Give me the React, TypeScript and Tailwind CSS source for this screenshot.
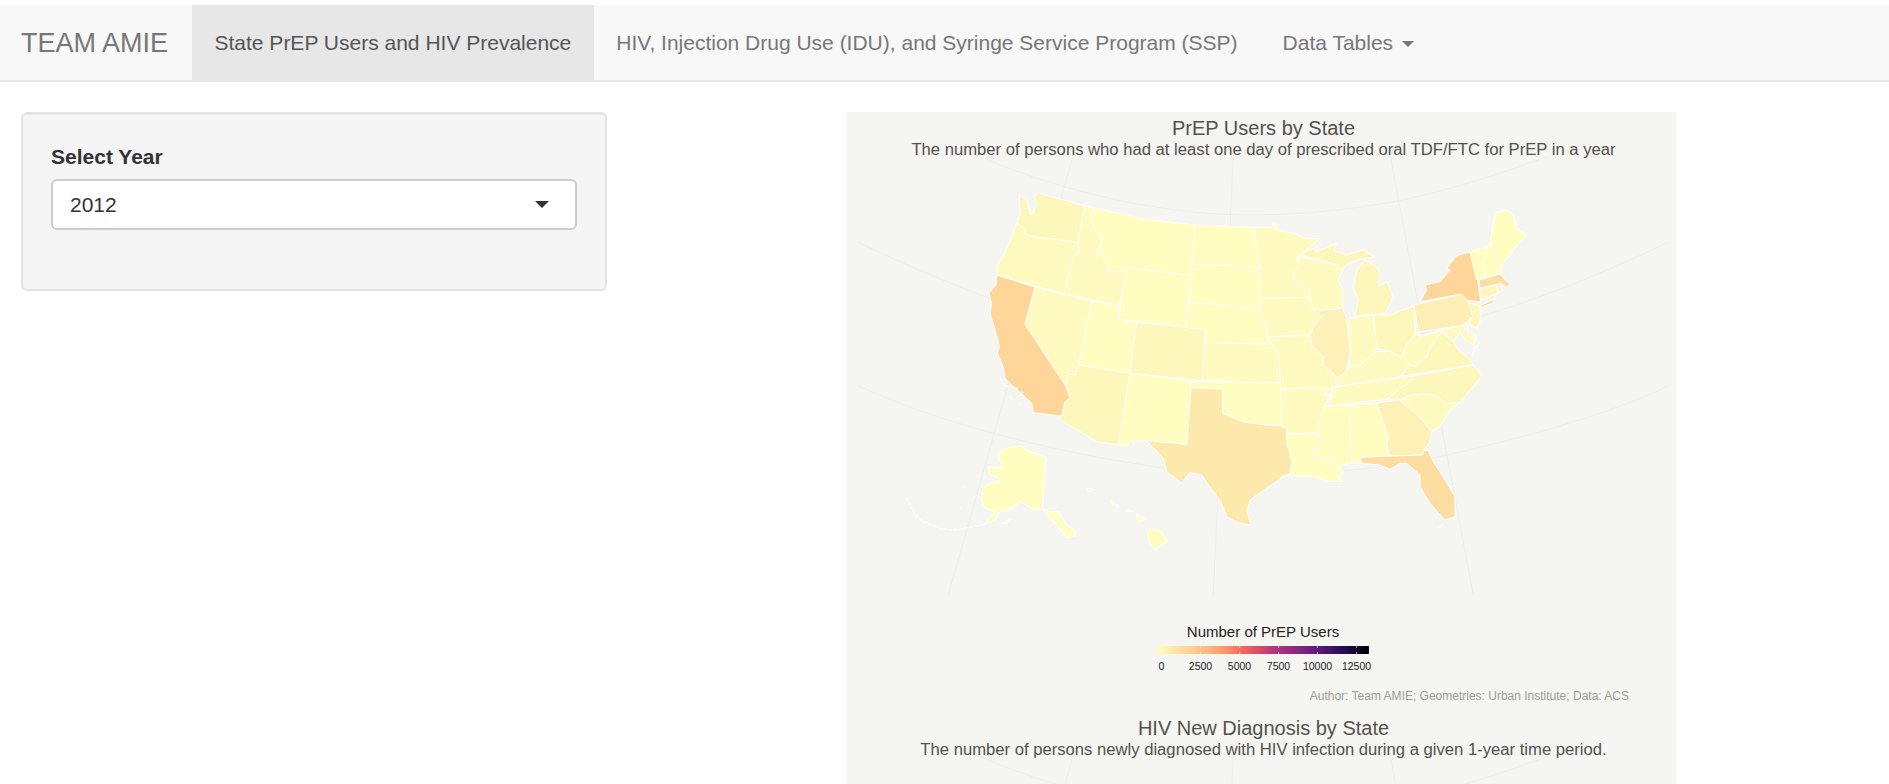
const TITLE = 'text-center text-[20px] leading-[20px] text-[#53524c]';
const SUBTITLE = 'mt-[5px] text-center text-[16.65px] leading-[14px] text-[#53524c]';

const L0 = '#fffdc0';
const L1 = '#fefac0';
const L2 = '#fdf7bc';
const L3 = '#fdf1b7';
const L4 = '#fdeeb5';
const TX = '#fee9ac';
const FL = '#fedda2';
const CA = '#ffd69a';

// points are in map units: 3 units = 1 screen pixel
const STATES: [string, string, string][] = [
  ['WA', L2, '538,285 560,300 572,345 580,340 590,310 582,290 592,278 735,318 712,430 680,422 640,417 600,413 575,410 558,405 552,385 530,368 541,345'],
  ['OR', L1, '530,368 552,385 558,405 600,413 640,417 680,422 712,430 720,447 700,475 688,495 692,505 672,582 470,525 472,495 490,465 510,425'],
  ['CA', CA, '470,525 585,561 555,672 680,862 690,895 675,905 665,948 580,938 575,910 550,885 525,865 495,835 490,800 472,760 478,740 468,700 450,640 455,610 447,580 468,555'],
  ['NV', L1, '585,561 755,603 716,795 705,825 685,822 680,862 555,672'],
  ['ID', L1, '735,318 760,323 752,365 785,420 770,465 790,465 805,515 855,515 860,503 838,617 672,582 692,505 688,495 700,475 720,447 712,430'],
  ['MT', L0, '760,323 900,355 1065,375 1052,527 860,503 855,515 805,515 790,465 770,465 785,420 752,365'],
  ['WY', L0, '860,503 1052,527 1038,683 835,657'],
  ['UT', L0, '755,603 838,617 835,657 890,667 870,820 716,795'],
  ['CO', L2, '890,667 1096,688 1087,842 870,820'],
  ['AZ', L2, '716,795 870,820 835,1035 770,1025 655,955 665,948 675,905 690,895 680,862 685,822 705,825'],
  ['NM', L0, '870,820 1053,843 1053,863 1040,1033 920,1022 865,1025 865,1038 835,1035'],
  ['TX', TX, '1053,863 1148,867 1148,940 1210,965 1280,975 1325,975 1340,985 1340,1030 1357,1080 1350,1120 1315,1140 1230,1200 1220,1230 1232,1275 1195,1268 1160,1250 1140,1200 1105,1155 1085,1125 1050,1118 1025,1148 980,1115 970,1075 920,1022 1040,1033'],
  ['OK', L0, '1055,845 1320,848 1323,867 1325,980 1340,985 1325,975 1280,975 1210,965 1148,940 1148,867 1053,863'],
  ['KS', L1, '1095,727 1295,733 1318,765 1320,848 1085,842'],
  ['NE', L0, '1048,607 1205,620 1235,622 1260,630 1282,710 1295,733 1095,727 1096,688 1038,683'],
  ['SD', L0, '1055,492 1258,500 1252,515 1262,530 1262,592 1258,620 1260,630 1235,622 1205,620 1048,607'],
  ['ND', L0, '1065,375 1242,382 1258,485 1258,500 1055,492'],
  ['MN', L1, '1242,382 1295,382 1300,368 1310,390 1360,400 1395,415 1440,415 1375,470 1375,500 1360,515 1365,545 1405,575 1410,592 1260,595 1262,510 1258,485'],
  ['IA', L1, '1260,595 1408,592 1415,620 1445,650 1420,680 1410,705 1285,710 1260,630'],
  ['MO', L1, '1285,710 1410,707 1415,735 1450,770 1450,795 1480,820 1490,835 1488,860 1478,860 1470,885 1452,885 1463,863 1322,867 1318,765 1295,733'],
  ['AR', L1, '1322,867 1463,863 1452,885 1470,885 1450,930 1432,998 1340,1002 1340,985 1325,980'],
  ['LA', L0, '1340,1002 1430,1000 1443,1025 1423,1078 1485,1078 1495,1105 1510,1115 1495,1135 1510,1145 1465,1145 1415,1128 1360,1128 1330,1125 1315,1140 1350,1120 1357,1080 1340,1030'],
  ['MS', L0, '1450,920 1530,915 1535,1090 1510,1095 1492,1110 1485,1078 1423,1078 1443,1025 1432,998'],
  ['AL', L0, '1530,915 1610,908 1645,1010 1640,1030 1650,1068 1560,1072 1565,1090 1550,1085 1535,1090'],
  ['GA', L3, '1610,908 1680,900 1730,940 1775,995 1768,1030 1750,1050 1748,1065 1650,1068 1640,1030 1645,1010'],
  ['SC', L1, '1680,905 1710,885 1760,880 1790,890 1820,910 1860,908 1830,930 1800,980 1775,995 1730,940'],
  ['FL', FL, '1560,1072 1650,1068 1748,1065 1750,1050 1765,1052 1780,1085 1815,1140 1845,1190 1845,1250 1815,1260 1770,1210 1740,1160 1740,1125 1700,1090 1680,1090 1650,1108 1620,1095 1565,1090'],
  ['TN', L1, '1490,860 1720,828 1710,845 1650,890 1645,897 1465,918 1478,880'],
  ['NC', L2, '1720,828 1900,795 1920,820 1925,830 1890,870 1860,908 1820,910 1790,890 1760,880 1710,885 1680,900 1645,897 1650,890 1710,845'],
  ['KY', L1, '1490,860 1488,835 1515,820 1530,800 1560,795 1605,755 1650,755 1685,770 1710,795 1680,830'],
  ['VA', L2, '1680,830 1710,795 1725,800 1760,770 1775,735 1805,695 1840,725 1860,755 1880,770 1900,793'],
  ['WV', L1, '1725,700 1735,697 1740,712 1800,690 1805,695 1775,735 1760,770 1725,800 1710,795 1685,770 1700,735'],
  ['OH', L2, '1600,645 1650,645 1720,618 1727,700 1700,735 1685,770 1650,755 1610,745'],
  ['IN', L1, '1523,655 1600,645 1610,745 1605,755 1560,795 1530,800 1532,760'],
  ['IL', L3, '1435,630 1508,625 1520,655 1532,760 1515,820 1488,835 1480,820 1450,795 1450,770 1415,735 1410,705 1420,680 1445,650 1415,620'],
  ['WI', L1, '1375,470 1430,480 1498,495 1515,490 1495,542 1508,570 1508,625 1435,630 1415,620 1405,575 1365,545 1360,515 1375,500'],
  ['MI', L2, '1575,480 1610,500 1620,520 1615,560 1640,545 1660,590 1635,640 1545,648 1555,600 1540,565 1550,510'],
  ['UP', L2, '1380,465 1420,445 1430,455 1490,430 1480,450 1520,465 1570,450 1605,470 1560,478 1525,490 1500,510 1495,495 1430,478'],
  ['PA', L4, '1722,615 1870,582 1895,605 1898,650 1870,675 1735,697'],
  ['NY', CA, '1740,605 1760,570 1755,555 1800,545 1830,510 1820,505 1850,467 1890,456 1910,515 1922,605 1910,605 1880,600 1865,582'],
  ['LI', CA, '1920,618 1965,595 1955,610 1925,622'],
  ['NJ', L2, '1885,605 1920,620 1923,660 1910,685 1885,670 1898,650 1890,625'],
  ['DE', L1, '1878,668 1885,690 1910,710 1890,712'],
  ['MD', L1, '1805,690 1870,675 1890,712 1910,715 1900,735 1875,720 1860,695 1840,725'],
  ['ES', L2, '1905,740 1915,735 1895,770'],
  ['VT', L0, '1890,456 1942,440 1930,490 1935,533 1910,540'],
  ['NH', L0, '1942,440 1950,430 1985,510 1980,520 1935,533 1930,490'],
  ['ME', L0, '1950,430 1965,340 2000,328 2020,345 2030,385 2060,405 2020,450 1990,490 1985,510'],
  ['MA', '#ffdca3', '1918,540 1980,522 1995,540 2010,550 2000,562 1982,550 1920,565'],
  ['CT', L2, '1920,565 1968,555 1975,578 1925,600'],
  ['RI', L2, '1968,555 1982,552 1988,572 1975,578'],
  ['AK', L0, '475,1058 505,1043 545,1038 565,1053 618,1072 607,1228 580,1230 555,1212 540,1205 515,1225 480,1235 465,1260 430,1275 465,1235 435,1225 423,1190 430,1162 460,1145 478,1148 475,1132 450,1125 445,1100 490,1105 475,1075'],
  ['AK2', L0, '607,1228 630,1235 655,1235 680,1275 705,1292 705,1308 680,1315 650,1275'],
  ['KOD', L0, '485,1270 510,1258 500,1272'],
  ['HI', L0, '928,1285 965,1295 982,1325 945,1348 930,1335 922,1310'],
  ['MAU', L0, '888,1242 920,1258 895,1265'],
  ['MOL', L0, '858,1228 882,1235 860,1235'],
  ['OAH', L0, '812,1200 838,1220 820,1218'],
  ['KAU', L0, '740,1165 760,1165 755,1175 740,1172'],
];

const Graticule = () => (
  <g fill="none" stroke="#ebebe6" strokeWidth="2.5">
    <path d="M415,168 C700,290 1000,345 1230,345 C1400,345 1550,325 1675,303 C1850,265 2000,215 2125,168" />
    <path d="M55,427 C500,640 900,760 1240,760 C1500,760 1750,710 1925,648 C2150,580 2330,500 2485,427" />
    <path d="M55,858 C300,970 650,1060 980,1105 C1240,1140 1550,1120 1775,1075 C2050,1015 2300,945 2485,858" />
    <path d="M700,165 L325,1485" />
    <path d="M1180,165 L1120,1485" />
    <path d="M1650,165 L1900,1485" />
  </g>
);

const UsMap = () => (
  <svg className="block h-[440px] w-[830px]" viewBox="18 165 2490 1320">
    <Graticule />
    <g stroke="#ffffff" strokeWidth="3" strokeLinejoin="round">
      {STATES.map(([name, fill, points]) => (
        <polygon key={name} fill={fill} points={points} />
      ))}
    </g>
    {/* Aleutians, islands off California, the Keys */}
    <g fill="none" stroke="#ffffff" strokeWidth="3.5" strokeLinecap="round">
      <path d="M430,1275 L390,1282 L340,1290 L300,1285 L250,1265 L225,1245" strokeDasharray="9 7" />
      <path d="M222,1240 L205,1200 M200,1195 L202,1200 M410,1125 L418,1132 M370,1160 L371,1163 M360,1222 L361,1226 M410,1187 L420,1188" strokeDasharray="6 8" />
      <path d="M625,1250 L655,1280 L680,1310 M640,1240 L675,1285" strokeWidth="3" />
      <path d="M490,855 L505,860 M522,862 L532,865 M545,875 L550,878 M510,890 L515,893 M540,910 L541,915" />
      <path d="M1795,1282 L1810,1275" />
    </g>
    <polygon fill={L2} stroke="#ffffff" strokeWidth="1.5" points="1798,1280 1808,1274 1804,1281" />
  </svg>
);

const Legend = () => (
  <div className="ml-[311px] w-[212px]">
    <div className="mt-[30px] whitespace-nowrap text-center text-[15px] leading-[14px] text-[#222222]">Number of PrEP Users</div>
    <svg className="mt-[7px] block h-[8px] w-[212px]" viewBox="0 0 212 8">
      <defs>
        <linearGradient id="magma">
          <stop offset="0" stopColor="#fcfdbf" />
          <stop offset="0.17" stopColor="#fecf92" />
          <stop offset="0.3" stopColor="#fe9f6d" />
          <stop offset="0.42" stopColor="#f1605d" />
          <stop offset="0.55" stopColor="#b63679" />
          <stop offset="0.72" stopColor="#721f81" />
          <stop offset="0.85" stopColor="#2d1160" />
          <stop offset="1" stopColor="#000004" />
        </linearGradient>
      </defs>
      <rect width="212" height="8" fill="url(#magma)" />
      <g stroke="#ffffff" strokeWidth="0.8" opacity="0.8">
        {[43.7, 82.7, 121.7, 160.3, 199.7].map(x => (
          <path key={x} d={`M${x},0 V2 M${x},6 V8`} />
        ))}
      </g>
    </svg>
    <div className="-ml-[15px] mt-[6px] grid w-[234px] grid-cols-6 text-center text-[10.5px] leading-[12px] text-[#222222]">
      {['0', '2500', '5000', '7500', '10000', '12500'].map(label => (
        <span key={label}>{label}</span>
      ))}
    </div>
  </div>
);

export default function App ()
{
  return (
    <div className="h-[784px] overflow-hidden bg-white pt-[5px] font-['Liberation_Sans',sans-serif]">
      {/* Navbar */}
      <nav className="flex h-[77px] items-stretch border-b-2 border-[#e7e7e7] bg-[#f8f8f8] text-[21px] text-[#777777]">
        <a className="flex w-[192px] items-center pl-[21px] pt-[1px] text-[27px]">TEAM AMIE</a>
        <a className="flex items-center bg-[#e7e7e7] px-[22.5px] text-[#555555]">State PrEP Users and HIV Prevalence</a>
        <a className="flex items-center px-[22.5px]">HIV, Injection Drug Use (IDU), and Syringe Service Program (SSP)</a>
        <a className="flex items-center px-[22.5px]">
          Data Tables
          <span className="ml-[9px] mt-[2px] border-x-[6px] border-t-[6px] border-x-transparent border-t-[#777777]"></span>
        </a>
      </nav>

      <div className="flex pt-[30px]">
        {/* Sidebar */}
        <aside className="w-[630px] shrink-0 pl-[21px] pr-[23px]">
          <div className="h-[179px] rounded-[6px] border-2 border-[#e3e3e3] bg-[#f5f5f5] px-[28px] pt-[30px] shadow-[inset_0_1px_1px_rgba(0,0,0,0.05)]">
            <label className="block text-[21px] font-bold leading-[26px] text-[#333333]">Select Year</label>
            <div className="mt-[9px] flex h-[51px] items-center justify-between rounded-[6px] border-2 border-[#cccccc] bg-white pl-[17px] pr-[26px] text-[21px] text-[#333333]">
              <span>2012</span>
              <span className="border-x-[7.5px] border-t-[7.5px] border-x-transparent border-t-[#333333]"></span>
            </div>
          </div>
        </aside>

        {/* Plot image */}
        <main className="flex flex-1 justify-center pl-[3px]">
          <div className="h-[672px] w-[830px] overflow-hidden bg-[#f5f5f2]">
            <div className="h-[43px] whitespace-nowrap pl-[5px] pt-[6px]">
              <div className={TITLE}>PrEP Users by State</div>
              <div className={SUBTITLE}>The number of persons who had at least one day of prescribed oral TDF/FTC for PrEP in a year</div>
            </div>
            <UsMap />
            <Legend />
            <div className="mt-[17px] pr-[47px] text-right text-[12px] leading-[14px] text-[#9d9d95]">Author: Team AMIE; Geometries: Urban Institute; Data: ACS</div>
            <div className="mt-[9px] h-[43px] whitespace-nowrap pl-[5px] pt-[6px]">
              <div className={TITLE}>HIV New Diagnosis by State</div>
              <div className={SUBTITLE}>The number of persons newly diagnosed with HIV infection during a given 1-year time period.</div>
            </div>
            <svg className="block h-[29px] w-[830px]" viewBox="18 165 2490 87">
              <Graticule />
            </svg>
          </div>
        </main>
      </div>
    </div>
  );
}
